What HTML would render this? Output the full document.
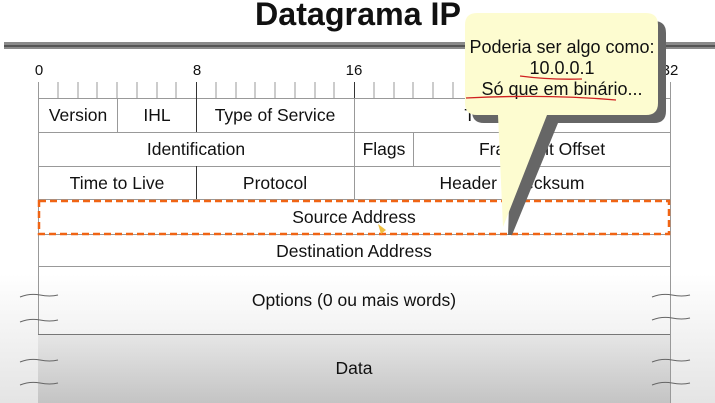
<!DOCTYPE html>
<html><head><meta charset="utf-8"><style>
html,body{margin:0;padding:0;width:715px;height:403px;overflow:hidden;background:#fff}
svg{display:block;font-family:"Liberation Sans",sans-serif}
</style></head><body>
<svg width="715" height="403" viewBox="0 0 715 403">
<defs>
<linearGradient id="bg" x1="0" y1="0" x2="0" y2="1">
<stop offset="0" stop-color="#fff"/><stop offset="0.68" stop-color="#fff"/><stop offset="1" stop-color="#e4e4e4"/>
</linearGradient>
<linearGradient id="dg" x1="0" y1="0" x2="0" y2="1">
<stop offset="0" stop-color="#e6e6e6"/><stop offset="1" stop-color="#c4c4c4"/>
</linearGradient>
</defs>
<rect width="715" height="403" fill="url(#bg)"/>
<text x="358" y="25" font-size="32" font-weight="bold" text-anchor="middle" fill="#111" textLength="206" lengthAdjust="spacingAndGlyphs">Datagrama IP</text>
<rect x="4" y="42" width="711" height="7" fill="#8a8a8a"/>
<rect x="4" y="45" width="711" height="2" fill="#555"/>
<g font-size="15" fill="#111" text-anchor="middle">
<text x="39" y="75">0</text><text x="197" y="75">8</text><text x="354" y="75">16</text><text x="670" y="75">32</text>
</g>
<g stroke="#999" stroke-width="1">
<path d="M38.5 82V403M670.5 82V403"/>
<path d="M58 82V98M78 82V98M97 82V98M117 82V98M137 82V98M157 82V98M176 82V98M216 82V98M236 82V98M255 82V98M275 82V98M295 82V98M315 82V98M334 82V98M374 82V98M394 82V98M413 82V98M433 82V98M453 82V98M473 82V98M492 82V98M512 82V98M532 82V98M552 82V98M571 82V98M591 82V98M611 82V98M631 82V98M650 82V98"/>
<path d="M38 98.5H670M38 132.5H670M38 166.5H670M38 199.5H670M38 234.5H670M38 266.5H670M38 334.5H670"/>
<path d="M117.5 98V132M354.5 98V132M354.5 132V166M413.5 132V166M354.5 166V199"/>
</g>
<g stroke="#333" stroke-width="1"><path d="M196.5 82V132M196.5 166V199M354.5 82V98"/></g>
<rect x="38" y="335" width="632" height="68" fill="url(#dg)"/>
<path d="M38 334.5H670" stroke="#777"/>
<g font-size="17.5" fill="#111" text-anchor="middle">
<text x="78" y="121">Version</text><text x="157" y="121">IHL</text><text x="275" y="121">Type of Service</text><text x="512" y="121">Total Length</text>
<text x="196" y="155">Identification</text><text x="384" y="155">Flags</text><text x="542" y="155">Fragment Offset</text>
<text x="117" y="189">Time to Live</text><text x="275" y="189">Protocol</text><text x="512" y="189">Header Checksum</text>
<text x="354" y="223">Source Address</text>
<text x="354" y="257">Destination Address</text>
<text x="354" y="306">Options (0 ou mais words)</text>
<text x="354" y="374">Data</text>
</g>
<g fill="none" stroke="#666" stroke-width="1">
<path d="M20 297q10 -4 20 -2t18 0M20 322q10 -4 20 -2t18 0M20 362q10 -4 20 -2t18 0M20 385q10 -4 20 -2t18 0"/>
<path d="M652 297q10 -4 20 -2t18 0M652 320q10 -4 20 -2t18 0M652 362q10 -4 20 -2t18 0M652 385q10 -4 20 -2t18 0"/>
</g>
<rect x="39" y="201" width="630" height="33" fill="none" stroke="#f06414" stroke-width="2.5" stroke-dasharray="7,4"/>
<path d="M378 224l8 6-5 4z" fill="#f0c040"/>
<path d="M480 17h170q12 0 12 12v78q0 12-12 12h-96l-46 112-4 0 4-112h-28q-12 0-12-12v-78q0-12 12-12z" fill="#666" transform="translate(4,4)"/>
<path d="M477 13h169q12 0 12 12v78q0 12-12 12h-99l-44 112-5-112h-21q-12 0-12-12v-78q0-12 12-12z" fill="#fdfcd0"/>
<g font-size="18" fill="#111" text-anchor="middle">
<text x="562" y="53">Poderia ser algo como:</text>
<text x="562" y="74">10.0.0.1</text>
<text x="562" y="95">Só que em binário...</text>
</g>
<g fill="none" stroke="#d02020" stroke-width="1.3">
<path d="M520 76q30 4 62 3"/>
<path d="M466 98q80-4 150 2"/>
</g>
</svg>
</body></html>
